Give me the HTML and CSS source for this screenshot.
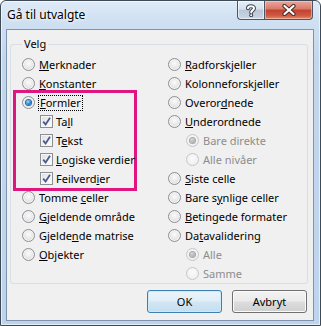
FILE: index.html
```html
<!DOCTYPE html>
<html>
<head>
<meta charset="utf-8">
<link rel="stylesheet" href="styles.css">
</head>
<body>
<div class="window">
  <div class="titlebar">
    <span class="title">Gå til utvalgte</span>
    <div class="caption-btns">
      <div class="cbtn help">
        <svg width="12" height="13" viewBox="0 0 12 13"><path d="M3 4.2 C3 1.6 9 1.4 9 4.3 C9 6.4 6.2 6.3 6.2 8.4" fill="none" stroke="#3b4048" stroke-width="4" stroke-linecap="round"/><circle cx="6.2" cy="11.3" r="1.9" fill="#3b4048"/><path d="M3 4.2 C3 1.6 9 1.4 9 4.3 C9 6.4 6.2 6.3 6.2 8.4" fill="none" stroke="#fff" stroke-width="2" stroke-linecap="round"/><circle cx="6.2" cy="11.3" r="1" fill="#fff"/></svg>
      </div>
      <div class="cbtn close">
        <svg width="14" height="12" viewBox="0 0 14 12"><path d="M2.5 2 L11.5 10 M11.5 2 L2.5 10" stroke="#4a2a24" stroke-width="4.2" stroke-linecap="round"/><path d="M2.5 2 L11.5 10 M11.5 2 L2.5 10" stroke="#fff" stroke-width="2.2" stroke-linecap="round"/></svg>
      </div>
    </div>
  </div>
  <div class="client">
    <fieldset class="group">
      <legend>Velg</legend>
      <div class="cols">
        <div class="col">
          <div class="row"><span class="radio"></span><span class="lbl"><u>M</u>erknader</span></div>
          <div class="row"><span class="radio"></span><span class="lbl"><u>K</u>onstanter</span></div>
          <div class="hl">
            <div class="row"><span class="radio checked"></span><span class="lbl focus"><u>F</u>ormler</span></div>
            <div class="row sub"><span class="check"><svg width="11" height="11" viewBox="0 0 11 11"><path d="M2.2 5.6 L4.6 8.4 L9 1.8" fill="none" stroke="#4c5c8c" stroke-width="1.8"/></svg></span><span class="lbl">Ta<u>l</u>l</span></div>
            <div class="row sub"><span class="check"><svg width="11" height="11" viewBox="0 0 11 11"><path d="M2.2 5.6 L4.6 8.4 L9 1.8" fill="none" stroke="#4c5c8c" stroke-width="1.8"/></svg></span><span class="lbl">T<u>e</u>kst</span></div>
            <div class="row sub"><span class="check"><svg width="11" height="11" viewBox="0 0 11 11"><path d="M2.2 5.6 L4.6 8.4 L9 1.8" fill="none" stroke="#4c5c8c" stroke-width="1.8"/></svg></span><span class="lbl"><u>L</u>ogiske verdier</span></div>
            <div class="row sub"><span class="check"><svg width="11" height="11" viewBox="0 0 11 11"><path d="M2.2 5.6 L4.6 8.4 L9 1.8" fill="none" stroke="#4c5c8c" stroke-width="1.8"/></svg></span><span class="lbl">Feilverd<u>i</u>er</span></div>
          </div>
          <div class="row"><span class="radio"></span><span class="lbl">Tomme <u>c</u>eller</span></div>
          <div class="row"><span class="radio"></span><span class="lbl"><u>G</u>jeldende område</span></div>
          <div class="row"><span class="radio"></span><span class="lbl">Gjelde<u>n</u>de matrise</span></div>
          <div class="row"><span class="radio"></span><span class="lbl"><u>O</u>bjekter</span></div>
        </div>
        <div class="col">
          <div class="row"><span class="radio"></span><span class="lbl"><u>R</u>adforskjeller</span></div>
          <div class="row"><span class="radio"></span><span class="lbl">Kolonneforsk<u>j</u>eller</span></div>
          <div class="row"><span class="radio"></span><span class="lbl">Overor<u>d</u>nede</span></div>
          <div class="row"><span class="radio"></span><span class="lbl"><u>U</u>nderordnede</span></div>
          <div class="row sub disabled"><span class="radio checked"></span><span class="lbl">Bare direkte</span></div>
          <div class="row sub disabled"><span class="radio"></span><span class="lbl">Alle nivåer</span></div>
          <div class="row"><span class="radio"></span><span class="lbl"><u>S</u>iste celle</span></div>
          <div class="row"><span class="radio"></span><span class="lbl">Bare s<u>y</u>nlige celler</span></div>
          <div class="row"><span class="radio"></span><span class="lbl"><u>B</u>etingede formater</span></div>
          <div class="row"><span class="radio"></span><span class="lbl">Da<u>t</u>avalidering</span></div>
          <div class="row sub disabled"><span class="radio checked"></span><span class="lbl">Alle</span></div>
          <div class="row sub disabled"><span class="radio"></span><span class="lbl">Samme</span></div>
        </div>
      </div>
    </fieldset>
    <div class="buttons">
      <button class="btn default">OK</button>
      <button class="btn">Avbryt</button>
    </div>
  </div>
</div>
</body>
</html>
```

FILE: styles.css
```css
* { box-sizing: border-box; }
html, body { margin: 0; padding: 0; }
body {
  width: 321px;
  height: 326px;
  overflow: hidden;
  background: #fff;
  font-family: "Noto Sans", "Open Sans", sans-serif;
  font-size: 11px;
  color: #000;
}
.window {
  width: 321px;
  height: 326px;
  border: 1px solid #3f4a57;
  border-radius: 6px 6px 0 0;
  background: linear-gradient(to bottom, #dfeaf7 0px, #cfe0f2 20px, #c2d7ee 60px, #bed4ec 100%);
  display: flex;
  flex-direction: column;
  box-shadow: inset 0 0 0 1px rgba(255,255,255,0.6);
}
.titlebar {
  height: 28px;
  display: flex;
  align-items: flex-start;
  justify-content: space-between;
  padding-left: 6px;
}
.title {
  font-size: 12px;
  line-height: 14px;
  margin-top: 7px;
  text-shadow: 0 0 6px #fff, 0 0 3px #fff;
}
.caption-btns {
  display: flex;
  margin-right: 7px;
}
.cbtn {
  height: 19px;
  border: 1px solid #4d5560;
  border-top: none;
  display: flex;
  align-items: center;
  justify-content: center;
}
.help {
  width: 27px;
  border-right: none;
  border-radius: 0 0 0 4px;
  background: linear-gradient(to bottom, #e6eef7 0%, #d6e1ed 45%, #b9c7d7 50%, #c9d6e4 100%);
  box-shadow: inset 0 0 0 1px rgba(255,255,255,0.6);
}
.close {
  width: 49px;
  border-radius: 0 0 4px 0;
  background: linear-gradient(to bottom, #e9a89c 0%, #d9796a 45%, #c2412f 50%, #cf5a44 80%, #e08a6a 100%);
  box-shadow: inset 0 0 0 1px rgba(255,220,210,0.5);
}
.client {
  flex: 1;
  margin: 0 6px 4px 5px;
  background: #f0f0f0;
  border: 1px solid #7f93ac;
  display: flex;
  flex-direction: column;
}
.group {
  margin: 7px 5px 0 3px;
  padding: 4px 0 0 11px;
  border: 1px solid #d5dfe5;
  border-radius: 3px;
  height: 247px;
  min-width: 0;
}
.group legend {
  padding: 0 2px;
  margin-left: 0;
  line-height: 14px;
  font-size: 11px;
}
.cols {
  display: grid;
  grid-template-columns: 146px 1fr;
}
.row {
  height: 19px;
  display: flex;
  align-items: center;
  white-space: nowrap;
}
.row.sub { padding-left: 18px; }
.radio {
  width: 13px;
  height: 13px;
  border-radius: 50%;
  border: 1px solid #8c8f94;
  background: radial-gradient(circle at 50% 40%, #fbfbfb 0%, #e8e8e8 50%, #d0d0d0 100%);
  box-shadow: inset 0 0 0 1px #f4f4f4;
  flex: none;
  display: flex;
  align-items: center;
  justify-content: center;
  margin-right: 4px;
}
.radio.checked::after {
  content: "";
  width: 5px;
  height: 5px;
  border-radius: 50%;
  background: radial-gradient(circle at 40% 35%, #a6e0ff 0%, #2c8ad8 50%, #0d4d8c 100%);
  box-shadow: 0 0 0 1px #2a6aaa;
}
.disabled .radio {
  border-color: #c4c6c9;
  background: radial-gradient(circle at 50% 40%, #fafafa, #ececec);
  box-shadow: none;
}
.disabled .radio.checked::after {
  background: radial-gradient(circle at 40% 35%, #d8d8d8, #9a9a9a);
  box-shadow: 0 0 0 1px #a8a8a8;
}
.disabled .lbl { color: #8d8d8d; }
.check {
  width: 13px;
  height: 13px;
  border: 1px solid #8c8f94;
  background: linear-gradient(135deg, #d9dcdf 0%, #f4f4f4 60%, #fdfdfd 100%);
  box-shadow: inset 0 0 0 1px #f6f6f6;
  flex: none;
  display: flex;
  align-items: center;
  justify-content: center;
  margin-right: 3px;
}
.lbl { line-height: 14px; }
.lbl u { text-decoration-thickness: 1px; text-underline-offset: 1px; }
.focus {
  outline: 1px dotted #000;
  outline-offset: 0px;
  padding: 0 1px;
}
.hl {
  margin-left: -6px;
  width: 118px;
  padding-left: 6px;
  box-shadow: 0 0 0 3px #e0157f;
}
.buttons {
  display: flex;
  justify-content: flex-end;
  gap: 10px;
  margin: 6px 6px 0 0;
}
.btn {
  width: 75px;
  height: 23px;
  font-family: inherit;
  font-size: 11px;
  color: #000;
  border: 1px solid #707070;
  border-radius: 3px;
  background: linear-gradient(to bottom, #f2f2f2 0%, #ebebeb 48%, #dddddd 52%, #cfcfcf 100%);
  box-shadow: inset 0 0 0 1px #fbfbfb;
  padding: 0;
}
.btn.default {
  border-color: #3c7fb1;
  background: linear-gradient(to bottom, #eaf4fa 0%, #e1eef7 48%, #d2e6f3 52%, #c4def0 100%);
  box-shadow: inset 0 0 0 1px #c9ebfb;
}
```
